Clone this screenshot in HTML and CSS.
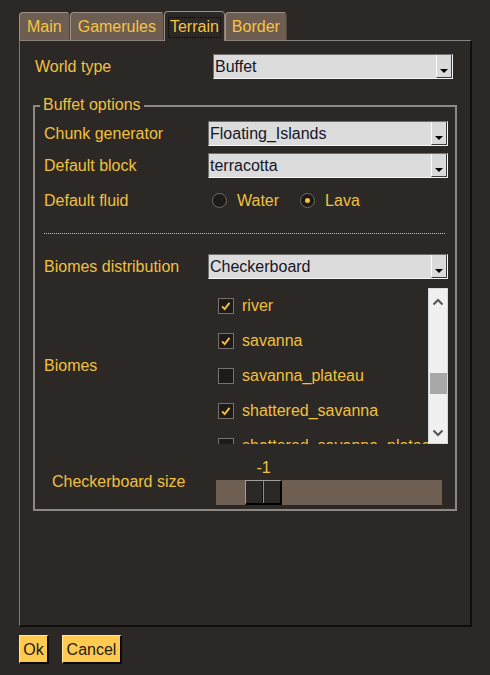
FILE: index.html
```
<!DOCTYPE html>
<html>
<head>
<meta charset="utf-8">
<link rel="stylesheet" href="styles.css">
</head>
<body>
<div class="tabs">
  <div class="tab">Main</div>
  <div class="tab">Gamerules</div>
  <div class="tab active"><span class="focus">Terrain</span></div>
  <div class="tab narrow">Border</div>
</div>
<div class="panel">
  <div class="top-row">
    <span class="label world-label">World type</span>
    <div class="select"><span class="value">Buffet</span><span class="arrow"><i class="tri"></i></span></div>
  </div>
  <div class="group">
    <span class="legend">Buffet options</span>
    <div class="field">
      <span class="label">Chunk generator</span>
      <div class="select"><span class="value">Floating_Islands</span><span class="arrow"><i class="tri"></i></span></div>
    </div>
    <div class="field gap7">
      <span class="label">Default block</span>
      <div class="select"><span class="value">terracotta</span><span class="arrow"><i class="tri"></i></span></div>
    </div>
    <div class="field gap10">
      <span class="label">Default fluid</span>
      <div class="radios">
        <span class="radio-opt"><span class="radio"></span><span class="label">Water</span></span>
        <span class="radio-opt"><span class="radio on"></span><span class="label">Lava</span></span>
      </div>
    </div>
    <div class="separator"></div>
    <div class="field">
      <span class="label">Biomes distribution</span>
      <div class="select"><span class="value">Checkerboard</span><span class="arrow"><i class="tri"></i></span></div>
    </div>
    <div class="field biomes-field">
      <span class="label">Biomes</span>
      <div class="list">
        <div class="items">
          <div class="item"><span class="check on"><svg viewBox="0 0 16 16" width="16" height="16"><path d="M3.5 8.5 L6.5 11.5 L12 4.5" fill="none" stroke="#f4c23e" stroke-width="2.2"/></svg></span><span class="label">river</span></div>
          <div class="item"><span class="check on"><svg viewBox="0 0 16 16" width="16" height="16"><path d="M3.5 8.5 L6.5 11.5 L12 4.5" fill="none" stroke="#f4c23e" stroke-width="2.2"/></svg></span><span class="label">savanna</span></div>
          <div class="item"><span class="check"></span><span class="label">savanna_plateau</span></div>
          <div class="item"><span class="check on"><svg viewBox="0 0 16 16" width="16" height="16"><path d="M3.5 8.5 L6.5 11.5 L12 4.5" fill="none" stroke="#f4c23e" stroke-width="2.2"/></svg></span><span class="label">shattered_savanna</span></div>
          <div class="item"><span class="check"></span><span class="label">shattered_savanna_plateau</span></div>
        </div>
        <div class="scrollbar">
          <svg class="chev" viewBox="0 0 12 8" width="12" height="8"><path d="M1.5 6.5 L6 2 L10.5 6.5" fill="none" stroke="#555" stroke-width="2"/></svg>
          <svg class="chev" viewBox="0 0 12 8" width="12" height="8"><path d="M1.5 1.5 L6 6 L10.5 1.5" fill="none" stroke="#555" stroke-width="2"/></svg>
          <span class="thumb"></span>
        </div>
      </div>
    </div>
    <div class="field checker-field">
      <span class="label">Checkerboard size</span>
      <div class="slider-box">
        <div class="slider-value label">-1</div>
        <div class="track"><div class="knob"><span class="half"></span><span class="half"></span></div></div>
      </div>
    </div>
  </div>
</div>
<div class="buttons">
  <button class="btn ok">Ok</button>
  <button class="btn cancel">Cancel</button>
</div>
</body>
</html>
```
FILE: styles.css
```
html, body {
  margin: 0;
  background: #2c2825;
}
body {
  width: 490px;
  height: 675px;
  overflow: hidden;
  font-family: "Liberation Sans", Arial, sans-serif;
  font-size: 16px;
  color: #f0c040;
}
.tabs {
  display: flex;
  align-items: flex-end;
  padding: 11px 0 0 19px;
  height: 29px;
}
.tab {
  height: 28px;
  box-sizing: border-box;
  padding: 0 7px;
  line-height: 28px;
  background: #6e5e51;
  color: #f5c443;
  border: 1px solid #9c9188;
  border-right-color: #4e443d;
  border-bottom: none;
  border-radius: 4px 4px 0 0;
}
.tab.narrow {
  padding: 0 6px;
}
.tab.active {
  height: 30px;
  margin-bottom: -1px;
  background: #2c2825;
  position: relative;
  z-index: 1;
  padding: 5px 3px 0 3px;
  line-height: 18px;
  border-right-color: #8a827b;
}
.focus {
  display: inline-block;
  border: 1px dotted #000;
  padding: 0 1px 1px;
}
.panel {
  margin-left: 19px;
  width: 453px;
  height: 587px;
  box-sizing: border-box;
  border-style: solid;
  border-width: 1px 2px 2px 1px;
  border-color: #8a847e #0f0e0d #0f0e0d #7d7873;
  padding: 13px 0 0 13px;
}
.label {
  color: #f0c040;
  white-space: nowrap;
}
.top-row {
  display: flex;
  align-items: center;
  height: 25px;
  padding-left: 2px;
}
.world-label {
  width: 178px;
}
.select {
  width: 240px;
  height: 25px;
  box-sizing: border-box;
  border: 1px solid;
  border-color: #6e6e6e #f6f6f6 #f6f6f6 #6e6e6e;
  background: #dcdcdc;
  display: flex;
  align-items: stretch;
  color: #161628;
}
.value {
  flex: 1;
  padding-left: 1px;
  line-height: 23px;
  white-space: nowrap;
  overflow: hidden;
}
.arrow {
  width: 16px;
  box-sizing: border-box;
  border-left: 1px solid #fbfbfb;
  border-right: 1px solid #3a3a3a;
  border-bottom: 1px solid #3a3a3a;
  background: #dadada;
  display: flex;
  align-items: flex-end;
  justify-content: center;
  padding-bottom: 4px;
}
.tri {
  width: 0;
  height: 0;
  border-left: 4px solid transparent;
  border-right: 4px solid transparent;
  border-top: 4px solid #000;
}
.group {
  position: relative;
  margin-top: 26px;
  width: 424px;
  height: 406px;
  box-sizing: border-box;
  border: 2px solid #8c8782;
  padding: 14px 7px 0 9px;
}
.legend {
  position: absolute;
  top: -12px;
  left: 5px;
  padding: 0 3px;
  background: #2c2825;
  line-height: 20px;
  color: #f0c040;
}
.field {
  display: grid;
  grid-template-columns: 164px 240px;
  align-items: center;
  height: 25px;
}
.gap7 { margin-top: 7px; }
.gap10 { margin-top: 10px; }
.radios {
  display: flex;
  align-items: center;
  padding-left: 4px;
}
.radio-opt {
  display: flex;
  align-items: center;
  gap: 10px;
  margin-right: 21px;
}
.radio {
  width: 15px;
  height: 15px;
  box-sizing: border-box;
  border-radius: 50%;
  border: 1px solid #6f6b67;
  background: #1d1a18;
  display: flex;
  align-items: center;
  justify-content: center;
}
.radio.on::after {
  content: "";
  width: 5px;
  height: 5px;
  border-radius: 50%;
  background: #f4c23e;
}
.separator {
  margin: 20px 3px 20px 0;
  border-top: 1px dotted #f2c23a;
}
.biomes-field {
  margin-top: 9px;
  height: 156px;
}
.list {
  display: flex;
  height: 156px;
}
.items {
  width: 220px;
  overflow: hidden;
}
.item {
  height: 35px;
  display: flex;
  align-items: center;
  gap: 8px;
  padding-left: 10px;
  white-space: nowrap;
}
.check {
  flex: none;
  width: 16px;
  height: 16px;
  box-sizing: border-box;
  border: 1px solid #75716d;
  background: #1d1a18;
  display: flex;
  align-items: center;
  justify-content: center;
}
.check svg {
  width: 14px;
  height: 14px;
}
.scrollbar {
  position: relative;
  width: 20px;
  box-sizing: border-box;
  border: 1px solid #d8d8d8;
  background: #f0f0f0;
  display: flex;
  flex-direction: column;
  align-items: center;
  justify-content: space-between;
  padding: 9px 0 6px;
}
.thumb {
  position: absolute;
  left: 1px;
  top: 84px;
  width: 17px;
  height: 21px;
  background: #a8a8a8;
}
.checker-field {
  margin-top: 15px;
  margin-left: 8px;
  grid-template-columns: 164px 226px;
  height: 46px;
}
.slider-box {
  display: flex;
  flex-direction: column;
}
.slider-value {
  width: 37px;
  margin-left: 29px;
  text-align: center;
  line-height: 18px;
  height: 18px;
  margin-bottom: 3px;
}
.track {
  height: 25px;
  background: #6e5f52;
  padding-left: 29px;
  display: flex;
}
.knob {
  width: 37px;
  height: 25px;
  box-sizing: border-box;
  border-style: solid;
  border-width: 1px 2px 2px 1px;
  border-color: #9e9e9e #000 #000 #9e9e9e;
  background: #2c2825;
  display: flex;
}
.half {
  flex: 1;
}
.half + .half {
  border-left: 1px solid #8e8e8e;
}
.half:first-child {
  border-right: 1px solid #111;
}
.buttons {
  display: flex;
  gap: 13px;
  padding: 8px 0 0 19px;
}
.btn {
  height: 29px;
  box-sizing: border-box;
  margin: 0;
  padding: 2px 0 0;
  font-family: "Liberation Sans", Arial, sans-serif;
  font-size: 16px;
  color: #1e1b18;
  background: #ffca50;
  border-style: solid;
  border-width: 1px 2px 2px 1px;
  border-color: #ffe6a0 #0b0a09 #0b0a09 #ffe6a0;
}
.ok { width: 30px; }
.cancel { width: 60px; }
```
